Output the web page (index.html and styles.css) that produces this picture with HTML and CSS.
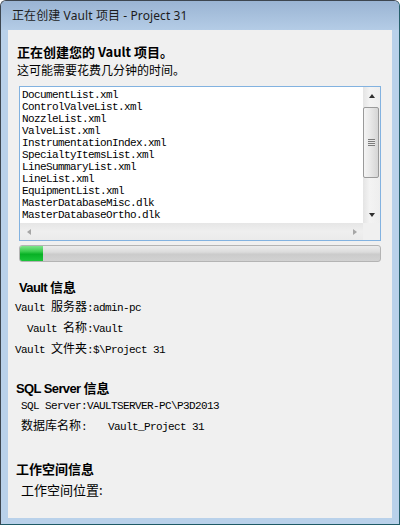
FILE: index.html
```html
<!DOCTYPE html>
<html lang="zh-CN">
<head>
<meta charset="utf-8">
<title>正在创建 Vault 项目 - Project 31</title>
<link rel="stylesheet" href="styles.css">
</head>
<body>
<div class="window">
  <div class="titlebar"><span class="title">正在创建 Vault 项目 - Project 31</span></div>
  <div class="client">
    <div class="intro-head">正在创建您的 Vault 项目。</div>
    <div class="intro-sub">这可能需要花费几分钟的时间。</div>

    <div class="listbox">
      <div class="list mono">
        <div>DocumentList.xml</div>
        <div>ControlValveList.xml</div>
        <div>NozzleList.xml</div>
        <div>ValveList.xml</div>
        <div>InstrumentationIndex.xml</div>
        <div>SpecialtyItemsList.xml</div>
        <div>LineSummaryList.xml</div>
        <div>LineList.xml</div>
        <div>EquipmentList.xml</div>
        <div>MasterDatabaseMisc.dlk</div>
        <div>MasterDatabaseOrtho.dlk</div>
      </div>
      <div class="vscroll">
        <div class="sbtn"><span class="arrow up"></span></div>
        <div class="thumb"><span class="grip"></span></div>
        <div class="vspace"></div>
        <div class="sbtn"><span class="arrow down"></span></div>
      </div>
      <div class="hscroll">
        <div class="hbtn"><span class="arrow left"></span></div>
        <div class="hbtn"><span class="arrow right"></span></div>
      </div>
      <div class="corner"></div>
    </div>

    <div class="progress"><div class="fill" style="width:23px"></div></div>

    <div class="sec-head vault-head"><span class="latin">Vault</span> 信息</div>
    <div class="kv mono">
      <div class="k">Vault <span class="cjk">服务器</span>:</div><div class="v">admin-pc</div>
      <div class="k">Vault <span class="cjk">名称</span>:</div><div class="v">Vault</div>
      <div class="k">Vault <span class="cjk">文件夹</span>:</div><div class="v">$\Project 31</div>
    </div>

    <div class="sec-head sql-head"><span class="latin">SQL Server</span> 信息</div>
    <div class="sql mono">
      <div class="row">SQL Server:VAULTSERVER-PC\P3D2013</div>
      <div class="row"><span class="cjk">数据库名称</span>:<span class="dbval">Vault_Project 31</span></div>
    </div>

    <div class="sec-head ws-head">工作空间信息</div>
    <div class="ws-row">工作空间位置:</div>
  </div>
</div>
</body>
</html>
```

FILE: styles.css
```css
html, body {
  margin: 0;
  padding: 0;
  background: #ffffff;
}

body {
  width: 400px;
  height: 526px;
  overflow: hidden;
  font-family: "Noto Sans", "Noto Sans CJK SC", sans-serif;
}

.window {
  box-sizing: border-box;
  width: 400px;
  height: 525px;
  border: 1px solid #3d4650;
  border-right-color: #27606c;
  border-bottom-color: #1f5a66;
  border-radius: 6px 6px 0 0;
  background: #b9d1ea;
  display: flex;
  flex-direction: column;
}

.titlebar {
  height: 29px;
  flex: none;
  display: flex;
  align-items: center;
  padding-left: 11px;
  background: linear-gradient(#9ab4d3, #b4cce6);
  border-radius: 5px 5px 0 0;
}

.title {
  font-family: "Noto Sans", "Noto Sans CJK SC", sans-serif;
  font-size: 12px;
  letter-spacing: 0.1px;
  color: #1c1c1c;
  line-height: 16px;
}

.client {
  width: 384px;
  height: 488px;
  flex: none;
  margin-left: 7px;
  background: #f0f0f0;
  display: flex;
  flex-direction: column;
  font-family: "Noto Sans CJK SC", sans-serif;
  color: #000;
  overflow: hidden;
}

.client > * {
  flex: none;
}

.intro-head {
  margin: 13px 0 0 9px;
  font-size: 13px;
  font-weight: bold;
  line-height: 18px;
}

.intro-sub {
  margin-left: 9px;
  font-size: 12px;
  line-height: 18px;
}

.mono {
  font-family: "Liberation Mono", monospace;
  font-size: 11px;
  letter-spacing: -0.6px;
}

.mono .cjk {
  font-family: "Noto Sans CJK SC", sans-serif;
  font-size: 12px;
  line-height: 12px;
  letter-spacing: 0;
}

/* list box */
.listbox {
  box-sizing: border-box;
  margin: 7px 0 0 11px;
  width: 362px;
  height: 155px;
  border: 1px solid #82b2e0;
  background: #fff;
  display: grid;
  grid-template-columns: 1fr 17px;
  grid-template-rows: 1fr 17px;
}

.list {
  padding: 2px 0 0 2px;
  line-height: 12px;
  overflow: hidden;
  white-space: nowrap;
}

.vscroll {
  display: flex;
  flex-direction: column;
  background: linear-gradient(90deg, #e4e4e4, #f3f3f3 40%, #eeeeee);
}

.sbtn {
  height: 17px;
  flex: none;
  display: flex;
  align-items: center;
  justify-content: center;
}

.thumb {
  box-sizing: border-box;
  flex: none;
  height: 71px;
  margin: 3px 1px 0 0;
  border: 1px solid #9a9a9a;
  border-radius: 2px;
  background: linear-gradient(90deg, #f4f4f4, #e8e8e8 45%, #d5d5d5);
  display: flex;
  align-items: center;
  justify-content: center;
}

.grip {
  width: 7px;
  height: 7px;
  background: repeating-linear-gradient(#7b7b7b 0 1px, #e8e8e8 1px 2px);
}

.vspace {
  flex: 1;
}

.hscroll {
  display: flex;
  justify-content: space-between;
  background: linear-gradient(#e6e6e6, #efefef 50%, #ebebeb);
}

.hbtn {
  width: 17px;
  display: flex;
  align-items: center;
  justify-content: center;
}

.corner {
  background: #f0f0f0;
}

.arrow {
  width: 0;
  height: 0;
  border-style: solid;
}

.arrow.up {
  border-width: 0 3.5px 4px 3.5px;
  border-color: transparent transparent #303030 transparent;
}

.arrow.down {
  border-width: 4px 3.5px 0 3.5px;
  border-color: #303030 transparent transparent transparent;
}

.arrow.left {
  border-width: 3.5px 4px 3.5px 0;
  border-color: transparent #a6a6a6 transparent transparent;
}

.arrow.right {
  border-width: 3.5px 0 3.5px 4px;
  border-color: transparent transparent transparent #a6a6a6;
}

/* progress */
.progress {
  box-sizing: border-box;
  margin: 4px 0 0 11px;
  width: 362px;
  height: 17px;
  border: 1px solid #b4b4b4;
  border-radius: 3px;
  background: linear-gradient(#ececec, #dcdcdc 40%, #cbcbcb 55%, #d2d2d2);
  overflow: hidden;
}

.fill {
  height: 100%;
  background: linear-gradient(#7fe48c, #3ccd4f 35%, #08b125 55%, #1bc53a);
}

/* sections */
.sec-head {
  font-weight: bold;
  font-size: 13px;
  line-height: 18px;
}

.sec-head .latin {
  font-family: "Liberation Sans", sans-serif;
  letter-spacing: -0.6px;
}

.vault-head {
  margin: 16px 0 1px 11px;
}

.kv {
  display: grid;
  grid-template-columns: 85px auto;
  grid-auto-rows: 21px;
  line-height: 21px;
}

.kv .k {
  text-align: right;
  white-space: pre;
}

.kv .v {
  white-space: pre;
}

.sql-head {
  margin: 18px 0 0 8px;
}

.sql {
  margin: -2px 0 0 13px;
  line-height: 21px;
}

.sql .row {
  height: 21px;
  white-space: pre;
}

.dbval {
  margin-left: 21px;
}

.ws-head {
  margin: 21px 0 0 8px;
  font-size: 13px;
  line-height: 20px;
}

.ws-row {
  margin-left: 13px;
  font-size: 13px;
  line-height: 22px;
}
```
